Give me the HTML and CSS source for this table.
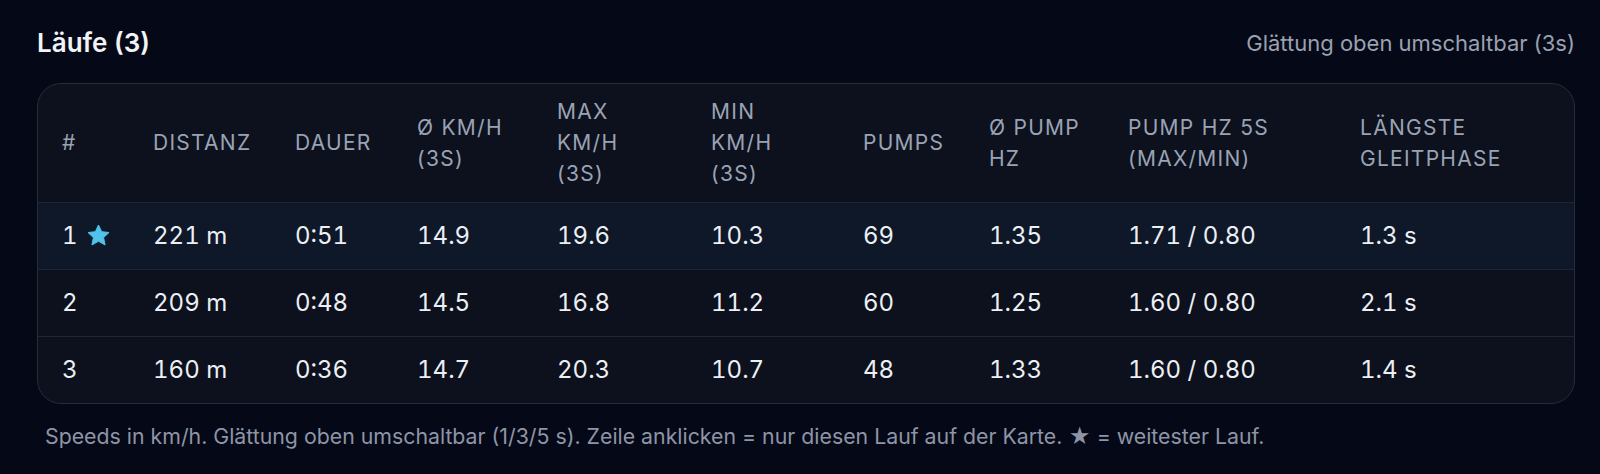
FILE: index.html
```html
<!DOCTYPE html>
<html lang="de">
<head>
<meta charset="utf-8">
<title>Läufe</title>
<link rel="stylesheet" href="styles.css">
</head>
<body>
<section class="runs">
  <header class="runs-head">
    <h2 class="runs-title">Läufe (3)</h2>
    <span class="runs-note">Glättung oben umschaltbar (3s)</span>
  </header>
  <div class="card">
    <table class="tbl">
      <colgroup>
        <col class="c1"><col class="c2"><col class="c3"><col class="c4"><col class="c5">
        <col class="c6"><col class="c7"><col class="c8"><col class="c9"><col class="c10">
      </colgroup>
      <thead>
        <tr>
          <th>#</th>
          <th>Distanz</th>
          <th>Dauer</th>
          <th>Ø km/h<br>(3s)</th>
          <th>Max<br>km/h<br>(3s)</th>
          <th>Min<br>km/h<br>(3s)</th>
          <th>Pumps</th>
          <th>Ø Pump<br>Hz</th>
          <th>Pump Hz 5s<br>(max/min)</th>
          <th>Längste<br>Gleitphase</th>
        </tr>
      </thead>
      <tbody>
        <tr class="best">
          <td><span class="idx">1<svg class="star" viewBox="0 0 24 24" width="23" height="23" aria-hidden="true"><path d="M12 1l3.3 7 7.7.9-5.7 5.3 1.6 7.7L12 18 5.1 21.9l1.6-7.7L1 8.9 8.7 8z" fill="currentColor" stroke="currentColor" stroke-width="1" stroke-linejoin="round"/></svg></span></td>
          <td>221 m</td><td>0:51</td><td>14.9</td><td>19.6</td><td>10.3</td><td>69</td><td>1.35</td><td>1.71 / 0.80</td><td>1.3 s</td>
        </tr>
        <tr>
          <td>2</td><td>209 m</td><td>0:48</td><td>14.5</td><td>16.8</td><td>11.2</td><td>60</td><td>1.25</td><td>1.60 / 0.80</td><td>2.1 s</td>
        </tr>
        <tr>
          <td>3</td><td>160 m</td><td>0:36</td><td>14.7</td><td>20.3</td><td>10.7</td><td>48</td><td>1.33</td><td>1.60 / 0.80</td><td>1.4 s</td>
        </tr>
      </tbody>
    </table>
  </div>
  <p class="foot">Speeds in km/h. Glättung oben umschaltbar (1/3/5 s). Zeile anklicken = nur diesen Lauf auf der Karte. ★ = weitester Lauf.</p>
</section>
</body>
</html>
```
FILE: styles.css
```css
html, body {
  margin: 0;
  padding: 0;
  background: #050816;
}
body {
  font-family: Inter, "Noto Sans", "Liberation Sans", sans-serif;
  color: #e8ebf1;
}
.runs {
  padding: 26px 25px 0 37px;
}
.runs-head {
  display: flex;
  justify-content: space-between;
  align-items: center;
  height: 34px;
}
.runs-title {
  margin: 0;
  font-size: 26px;
  font-weight: 600;
  line-height: 34px;
  color: #f1f3f7;
}
.runs-note {
  font-size: 22px;
  line-height: 34px;
  color: #9aa1b1;
}
.card {
  margin-top: 23px;
  background: #0d111d;
  border: 1px solid #252c3c;
  border-radius: 24px;
  overflow: hidden;
}
.tbl {
  width: 100%;
  border-collapse: collapse;
  table-layout: fixed;
}
.c1 { width: 91px; }
.c2 { width: 142px; }
.c3 { width: 122px; }
.c4 { width: 140px; }
.c5 { width: 154px; }
.c6 { width: 152px; }
.c7 { width: 126px; }
.c8 { width: 139px; }
.c9 { width: 232px; }
.tbl th,
.tbl td {
  padding: 0 0 0 24px;
  text-align: left;
  vertical-align: middle;
  white-space: nowrap;
}
.tbl thead tr {
  height: 118px;
}
.tbl th {
  font-size: 21px;
  font-weight: 400;
  line-height: 31px;
  letter-spacing: 0.06em;
  text-transform: uppercase;
  color: #9aa3b5;
}
.tbl tbody tr {
  height: 67px;
  border-top: 1px solid #1f2636;
}
.tbl tbody tr.best {
  background: #0f1828;
}
.tbl td {
  font-size: 24px;
  line-height: 30px;
  font-variant-numeric: tabular-nums;
  color: #eceff4;
}
.idx {
  display: inline-flex;
  align-items: center;
  gap: 9px;
}
.star {
  color: #4fc3ec;
  display: block;
}
.foot {
  margin: 17px 0 0 8px;
  font-size: 21.3px;
  line-height: 30px;
  color: #8e95a6;
}
```
